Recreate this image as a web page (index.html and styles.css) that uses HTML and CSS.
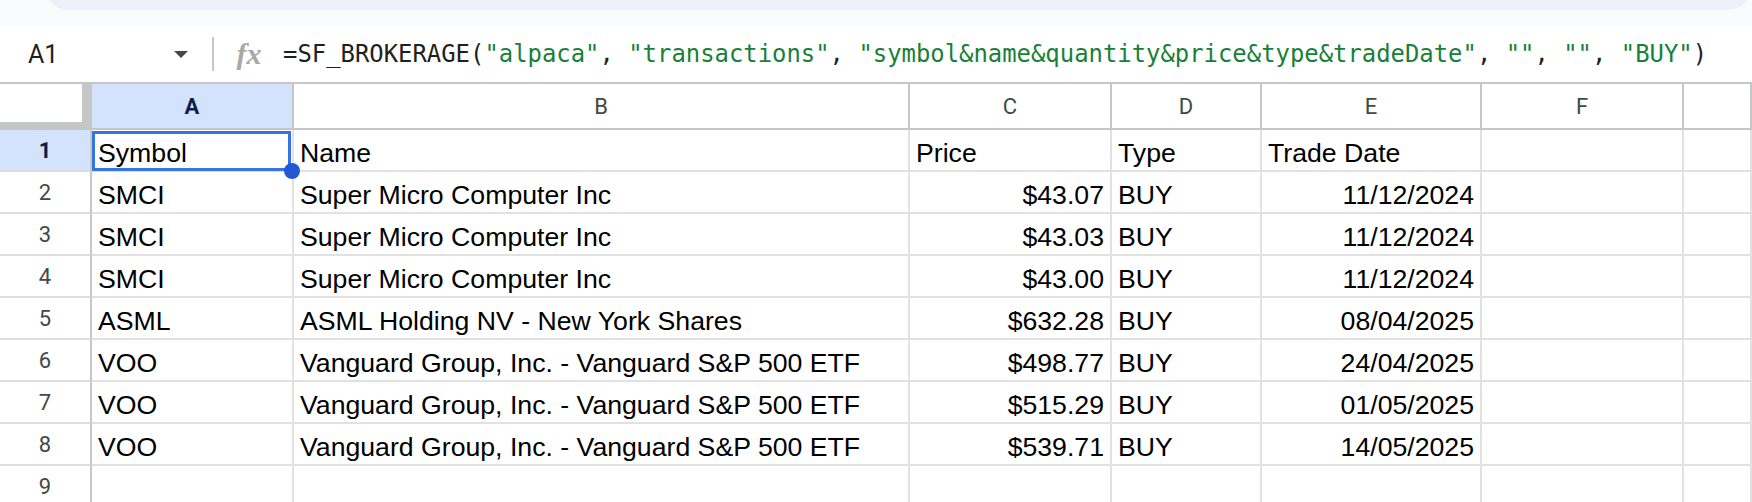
FILE: index.html
```html
<!DOCTYPE html>
<html lang="en">
<head>
    <meta charset="UTF-8">
    <title>Transactions</title>
    <link rel="stylesheet" href="styles.css">
</head>
<body>
    <!-- Parte baja de la barra de herramientas -->
    <div class="top-strip">
        <div class="toolbar"></div>
    </div>

    <!-- Barra de fórmulas -->
    <div class="formula-bar">
        <div class="name-box">
            <span>A1</span>
            <span class="arrow"></span>
        </div>
        <div class="divider"></div>
        <div class="fx">fx</div>
        <div class="formula">=SF_BROKERAGE(<span class="str">"alpaca"</span>, <span class="str">"transactions"</span>, <span class="str">"symbol&amp;name&amp;quantity&amp;price&amp;type&amp;tradeDate"</span>, <span class="str">""</span>, <span class="str">""</span>, <span class="str">"BUY"</span>)</div>
    </div>

    <!-- Hoja -->
    <div class="sheet">
        <div class="row head">
            <div class="corner"></div>
            <div class="col-h active">A</div>
            <div class="col-h">B</div>
            <div class="col-h">C</div>
            <div class="col-h">D</div>
            <div class="col-h">E</div>
            <div class="col-h">F</div>
            <div class="col-h"></div>
        </div>
        <div class="row">
            <div class="row-h active">1</div>
            <div class="cell selected">Symbol<span class="handle"></span></div>
            <div class="cell">Name</div>
            <div class="cell">Price</div>
            <div class="cell">Type</div>
            <div class="cell">Trade Date</div>
            <div class="cell"></div>
            <div class="cell"></div>
        </div>
        <div class="row">
            <div class="row-h">2</div>
            <div class="cell">SMCI</div>
            <div class="cell">Super Micro Computer Inc</div>
            <div class="cell num">$43.07</div>
            <div class="cell">BUY</div>
            <div class="cell num">11/12/2024</div>
            <div class="cell"></div>
            <div class="cell"></div>
        </div>
        <div class="row">
            <div class="row-h">3</div>
            <div class="cell">SMCI</div>
            <div class="cell">Super Micro Computer Inc</div>
            <div class="cell num">$43.03</div>
            <div class="cell">BUY</div>
            <div class="cell num">11/12/2024</div>
            <div class="cell"></div>
            <div class="cell"></div>
        </div>
        <div class="row">
            <div class="row-h">4</div>
            <div class="cell">SMCI</div>
            <div class="cell">Super Micro Computer Inc</div>
            <div class="cell num">$43.00</div>
            <div class="cell">BUY</div>
            <div class="cell num">11/12/2024</div>
            <div class="cell"></div>
            <div class="cell"></div>
        </div>
        <div class="row">
            <div class="row-h">5</div>
            <div class="cell">ASML</div>
            <div class="cell">ASML Holding NV - New York Shares</div>
            <div class="cell num">$632.28</div>
            <div class="cell">BUY</div>
            <div class="cell num">08/04/2025</div>
            <div class="cell"></div>
            <div class="cell"></div>
        </div>
        <div class="row">
            <div class="row-h">6</div>
            <div class="cell">VOO</div>
            <div class="cell">Vanguard Group, Inc. - Vanguard S&amp;P 500 ETF</div>
            <div class="cell num">$498.77</div>
            <div class="cell">BUY</div>
            <div class="cell num">24/04/2025</div>
            <div class="cell"></div>
            <div class="cell"></div>
        </div>
        <div class="row">
            <div class="row-h">7</div>
            <div class="cell">VOO</div>
            <div class="cell">Vanguard Group, Inc. - Vanguard S&amp;P 500 ETF</div>
            <div class="cell num">$515.29</div>
            <div class="cell">BUY</div>
            <div class="cell num">01/05/2025</div>
            <div class="cell"></div>
            <div class="cell"></div>
        </div>
        <div class="row">
            <div class="row-h">8</div>
            <div class="cell">VOO</div>
            <div class="cell">Vanguard Group, Inc. - Vanguard S&amp;P 500 ETF</div>
            <div class="cell num">$539.71</div>
            <div class="cell">BUY</div>
            <div class="cell num">14/05/2025</div>
            <div class="cell"></div>
            <div class="cell"></div>
        </div>
        <div class="row">
            <div class="row-h">9</div>
            <div class="cell"></div>
            <div class="cell"></div>
            <div class="cell"></div>
            <div class="cell"></div>
            <div class="cell"></div>
            <div class="cell"></div>
            <div class="cell"></div>
        </div>
    </div>
</body>
</html>
```

FILE: styles.css
```css
/* Estilo general */
body {
    margin: 0;
    background: #ffffff;
    font-family: "Liberation Sans", Arial, sans-serif;
    color: #000000;
    overflow: hidden;
}

/* Franja superior */
.top-strip {
    height: 26px;
    background: #f9fbfd;
    overflow: hidden;
}

.toolbar {
    height: 48px;
    margin-top: -38px;
    margin-left: 45px;
    border-radius: 24px;
    background: #edf2fa;
}

/* Barra de fórmulas */
.formula-bar {
    height: 56px;
    display: flex;
    align-items: center;
    background: #ffffff;
}

.name-box {
    width: 160px;
    margin-left: 28px;
    display: flex;
    justify-content: space-between;
    align-items: center;
    font-family: Roboto, "Liberation Sans", sans-serif;
    font-size: 25px;
    color: #1f1f1f;
}

.arrow {
    width: 0;
    height: 0;
    border-left: 7.5px solid transparent;
    border-right: 7.5px solid transparent;
    border-top: 7px solid #444746;
}

.divider {
    width: 2px;
    height: 34px;
    margin-left: 24px;
    background: #c7c7c7;
}

.fx {
    width: 30px;
    margin-left: 20px;
    text-align: center;
    font-family: "Liberation Serif", serif;
    font-style: italic;
    font-weight: bold;
    font-size: 30px;
    color: #a8a8a8;
    line-height: 1;
}

.formula {
    margin-left: 19px;
    font-family: "DejaVu Sans Mono", monospace;
    font-size: 23.9px;
    color: #1f1f1f;
    white-space: nowrap;
}

.formula .str {
    color: #188038;
}

/* Hoja */
.row {
    display: grid;
    grid-template-columns: 92px 202px 616px 202px 150px 220px 202px 1fr;
}

.row.head {
    border-top: 2px solid #c4c7c5;
}

.row div {
    box-sizing: border-box;
}

.corner {
    height: 46px;
    background: #ffffff;
    border-right: 10px solid #c4c7c5;
    border-bottom: 8px solid #c4c7c5;
}

.col-h {
    height: 46px;
    display: flex;
    align-items: center;
    justify-content: center;
    border-right: 2px solid #c4c7c5;
    border-bottom: 2px solid #c4c7c5;
    font-family: Roboto, "Liberation Sans", sans-serif;
    font-size: 22px;
    color: #444746;
}

.row-h {
    height: 42px;
    display: flex;
    align-items: center;
    justify-content: center;
    border-right: 2px solid #c4c7c5;
    border-bottom: 2px solid #dcdcdc;
    font-family: Roboto, "Liberation Sans", sans-serif;
    font-size: 22px;
    color: #444746;
}

.col-h.active,
.row-h.active {
    background: #d3e3fd;
    color: #0b1f4a;
    font-weight: bold;
}

.cell {
    position: relative;
    height: 42px;
    display: flex;
    align-items: flex-end;
    padding: 0 6px 2px 6px;
    border-right: 2px solid #e1e1e1;
    border-bottom: 2px solid #e1e1e1;
    font-size: 26.67px;
    line-height: 30px;
    white-space: nowrap;
    overflow: hidden;
}

.cell.num {
    justify-content: flex-end;
}

/* Celda seleccionada */
.cell.selected {
    overflow: visible;
}

.cell.selected::after {
    content: "";
    position: absolute;
    left: 0;
    top: 1px;
    right: 1px;
    bottom: -1px;
    border: 3px solid #3574e3;
}

.handle {
    position: absolute;
    right: -8px;
    bottom: -9px;
    width: 16px;
    height: 16px;
    border-radius: 50%;
    background: #2458d3;
    z-index: 2;
}
```
